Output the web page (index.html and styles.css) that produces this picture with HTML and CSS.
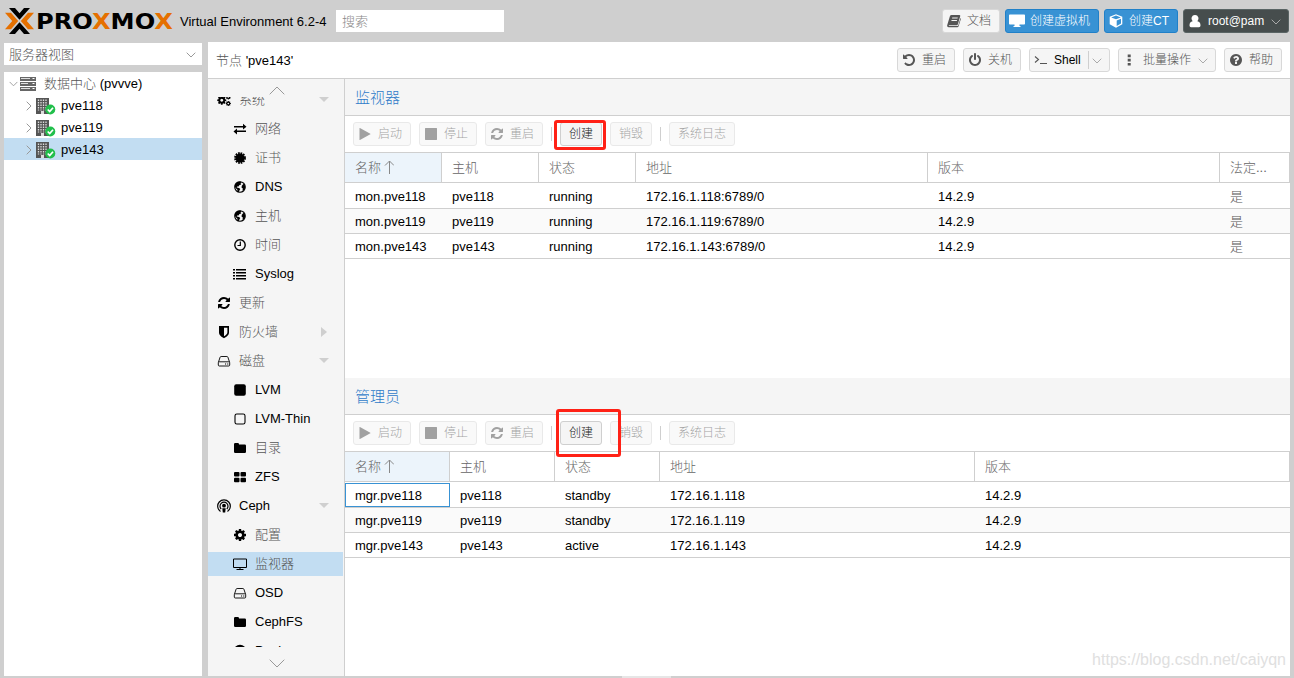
FILE: index.html
```html
<!DOCTYPE html>
<html lang="zh-CN">
  <head>
    <meta charset="UTF-8" />
    <meta name="viewport" content="width=device-width, initial-scale=1.0" />
    <title>pve143 - Proxmox Virtual Environment</title>
    <link rel="stylesheet" href="styles.css">
  </head>
  <body>
    <!-- icon sprite -->
    <svg class="sprite">
      <symbol id="play" viewBox="0 0 1792 1792"><path d="M1576 927l-1328 738q-23 13-39.5 3t-16.5-36v-1472q0-26 16.5-36t39.5 3l1328 738q23 13 23 31t-23 31z"/></symbol>
      <symbol id="stop" viewBox="0 0 1792 1792"><path d="M1664 192v1408q0 26-19 45t-45 19h-1408q-26 0-45-19t-19-45v-1408q0-26 19-45t45-19h1408q26 0 45 19t19 45z"/></symbol>
      <symbol id="refresh" viewBox="0 0 1792 1792"><path d="M1639 1056q0 5-1 7-64 268-268 434.5t-478 166.5q-146 0-282.5-55t-243.5-157l-129 129q-19 19-45 19t-45-19-19-45v-448q0-26 19-45t45-19h448q26 0 45 19t19 45-19 45l-137 137q71 66 161 102t187 36q134 0 250-65t186-179q11-17 53-117 8-23 30-23h192q13 0 22.5 9.5t9.5 22.5zm25-800v448q0 26-19 45t-45 19h-448q-26 0-45-19t-19-45 19-45l138-138q-148-137-349-137-134 0-250 65t-186 179q-11 17-53 117-8 23-30 23h-199q-13 0-22.5-9.5t-9.5-22.5v-7q65-268 270-434.5t480-166.5q146 0 284 55.5t245 156.5l130-129q19-19 45-19t45 19 19 45z"/></symbol>
      <symbol id="undo" viewBox="0 0 1792 1792"><path d="M1664 896q0 156-61 298t-164 245-245 164-298 61q-172 0-327-72.5t-264-204.5q-7-10-6.5-22.5t8.5-20.5l137-138q10-9 25-9 16 2 23 12 73 95 179 147t225 52q104 0 198.5-40.5t163.5-109.5 109.5-163.5 40.5-198.5-40.5-198.5-109.5-163.5-163.5-109.5-198.5-40.5q-98 0-188 35.5t-160 101.5l137 138q31 30 14 69-17 40-59 40h-448q-26 0-45-19t-19-45v-448q0-42 40-59 39-17 69 14l130 129q107-101 244.5-156.5t284.5-55.5q156 0 298 61t245 164 164 245 61 298z"/></symbol>
      <symbol id="power" viewBox="0 0 1792 1792"><path d="M1664 896q0 156-61 298t-164 245-245 164-298 61-298-61-245-164-164-245-61-298q0-182 80.5-343t226.5-270q43-32 95.5-25t83.5 50q32 42 24.5 94.5t-49.5 84.5q-98 74-151.5 181t-53.5 228q0 104 40.5 198.5t109.5 163.5 163.5 109.5 198.5 40.5 198.5-40.5 163.5-109.5 109.5-163.5 40.5-198.5q0-121-53.5-228t-151.5-181q-42-32-49.5-84.5t24.5-94.5q31-43 84-50t95 25q146 109 226.5 270t80.5 343zm-640-768v640q0 52-38 90t-90 38-90-38-38-90v-640q0-52 38-90t90-38 90 38 38 90z"/></symbol>
      <symbol id="question" viewBox="0 0 1792 1792"><path d="M1024 1376v-192q0-14-9-23t-23-9h-192q-14 0-23 9t-9 23v192q0 14 9 23t23 9h192q14 0 23-9t9-23zm256-672q0-88-55.5-163t-138.5-116-170-41q-243 0-371 213-15 24 8 42l132 100q7 6 19 6 16 0 25-12 53-68 86-92 34-24 86-24 48 0 85.5 26t37.5 59q0 38-20 61t-68 45q-63 28-115.5 86.5t-52.5 125.5v36q0 14 9 23t23 9h192q14 0 23-9t9-23q0-19 21.5-49.5t54.5-49.5q32-18 49-28.5t46-35 44.5-48 28-60.5 12.5-81zm384 192q0 209-103 385.5t-279.5 279.5-385.5 103-385.5-103-279.5-279.5-103-385.5 103-385.5 279.5-279.5 385.5-103 385.5 103 279.5 279.5 103 385.5z"/></symbol>
      <symbol id="cog" viewBox="0 0 1792 1792"><path d="M1152 896q0-106-75-181t-181-75-181 75-75 181 75 181 181 75 181-75 75-181zm512-109v222q0 12-8 23t-20 13l-185 28q-19 54-39 91 35 50 107 138 10 12 10 25t-9 23q-27 37-99 108t-94 71q-12 0-26-9l-138-108q-44 23-91 38-16 136-29 186-7 28-36 28h-222q-14 0-24.5-8.5t-11.5-21.5l-28-184q-49-16-90-37l-141 107q-10 9-25 9-14 0-25-11-126-114-165-168-7-10-7-23 0-12 8-23 15-21 51-66.5t54-70.5q-27-50-41-99l-183-27q-13-2-21-12.5t-8-23.5v-222q0-12 8-23t19-13l186-28q14-46 39-92-40-57-107-138-10-12-10-24 0-10 9-23 26-36 98.5-107.5t94.5-71.5q13 0 26 10l138 107q44-23 91-38 16-136 29-186 7-28 36-28h222q14 0 24.5 8.5t11.5 21.5l28 184q49 16 90 37l142-107q9-9 24-9 13 0 25 10 129 119 165 170 7 8 7 22 0 12-8 23-15 21-51 66.5t-54 70.5q26 50 41 98l183 28q13 2 21 12.5t8 23.5z"/></symbol>
      <symbol id="cogs" viewBox="0 0 14 14"><use href="#cog" x="-.5" y="2" width="10.5" height="10.5"/><use href="#cog" x="8.3" y="1" width="6" height="6"/><use href="#cog" x="8.3" y="7.5" width="6" height="6"/></symbol>
      <symbol id="exchange" viewBox="0 0 14 14"><path d="M1 4h9V1.8L13.5 4.8 10 7.6V5.5H1zM13 8.5H4V6.4L.5 9.6 4 12.4V10h9z"/></symbol>
      <symbol id="cert" viewBox="0 0 14 14"><circle cx="7" cy="7" r="4.6"/><circle cx="7" cy="7" r="5" fill="none" stroke="currentColor" stroke-width="1.8" stroke-dasharray="1.7 .92"/></symbol>
      <symbol id="globe" viewBox="0 0 14 14"><circle cx="7" cy="7" r="5.3" fill="none" stroke="currentColor" stroke-width="1.1"/><path d="M2 4.200L4.500 1.800 7.500 1.500 8.800 2.800 7.500 3.500 8.300 4.500 6.500 5 5.500 6.500 4 6.500 3.800 7.500 6 8 7.300 9 6.500 10.200 5.800 12.300 4.500 11.500 4.300 9.500 2.500 8 1.700 6zM10.500 3.800L12 5.500V8.500L10.500 10.800 9.500 10.500 9.800 8.500 8.500 7.500 8.800 5.800z"/></symbol>
      <symbol id="clock" viewBox="0 0 14 14"><path d="M7.300 3.500v4H4.500" fill="none" stroke="currentColor" stroke-width="1.200"/><circle cx="7" cy="7" r="5.200" fill="none" stroke="currentColor" stroke-width="1.400"/></symbol>
      <symbol id="list" viewBox="0 0 14 14"><path d="M0 2h2v1.600H0zM3 2h10v1.600H3zM0 5h2v1.600H0zM3 5h10v1.600H3zM0 8h2v1.600H0zM3 8h10v1.600H3zM0 11h2v1.500H0zM3 11h10v1.500H3z"/></symbol>
      <symbol id="shield" viewBox="0 0 14 14"><path fill-rule="evenodd" d="M2 1h10v6.500c0 3-3 4.700-5 5.700-2-1-5-2.700-5-5.700zM7 2.700v8.600c1.800-1 3.400-2.200 3.400-4V2.700z"/></symbol>
      <symbol id="hdd" viewBox="0 0 14 14"><path d="M2.200 7.800h9.600c.5 0 .9.400.9.900v2.400c0 .5-.4.900-.9.900H2.200c-.5 0-.9-.4-.9-.9V8.700c0-.5.4-.9.900-.9zM1.500 8l1.600-4.800q.3-.7 1-.7h5.800q.7 0 1 .7L12.500 8" fill="none" stroke="currentColor" stroke-width=".9"/><path d="M8 9.400h1.100v1.100H8zM10.200 9.400h1.100v1.100h-1.100z"/></symbol>
      <symbol id="square" viewBox="0 0 14 14"><rect x="1.200" y="1.300" width="11.600" height="11.400" rx="2"/></symbol>
      <symbol id="square-o" viewBox="0 0 14 14"><rect x="2" y="2" width="10" height="10" rx="1.800" fill="none" stroke="currentColor" stroke-width="1.100"/></symbol>
      <symbol id="folder" viewBox="0 0 14 14"><path d="M1 3.200Q1 2 2.200 2h2.600Q6 2 6 3.200v.3h5.800q1.200 0 1.200 1.200v6.100q0 1.200-1.200 1.200H2.200Q1 12 1 10.800z"/></symbol>
      <symbol id="grid" viewBox="0 0 14 14"><rect x="1" y="2" width="5.500" height="4.500" rx="1"/><rect x="7.500" y="2" width="5.500" height="4.500" rx="1"/><rect x="1" y="7.700" width="5.500" height="4.500" rx="1"/><rect x="7.500" y="7.700" width="5.500" height="4.500" rx="1"/></symbol>
      <symbol id="ceph" viewBox="0 0 14 14"><g fill="none" stroke="currentColor" stroke-width="1.200"><path d="M3.500 12.400A6.300 6.300 0 1 1 10.500 12.400M4.200 10A4 4 0 1 1 9.800 10"/></g><circle cx="7" cy="6.700" r="1.900"/><path d="M5.300 9.200h3.400L8.200 13.500H5.800z"/></symbol>
      <symbol id="screen" viewBox="0 0 16 14"><path d="M1.500 2h13v8.500h-13zM8 10.500v2M4.500 12.500h7" fill="none" stroke="currentColor" stroke-width="1"/></symbol>
      <symbol id="desktop" viewBox="0 0 16 14"><path d="M.8.500h14.400q.8 0 .8.800v8.400q0 .8-.8.800h-4.700v1.500h1V13h-7v-1h1v-1.500H.8q-.8 0-.8-.8V1.300Q0 .5.800.5z"/></symbol>
      <symbol id="cube" viewBox="0 0 14 14"><path fill-rule="evenodd" d="M7 .3l6.300 2.500v7.500L7 13.700.7 10.300V2.800zM7 1.500L2.200 3.400 7 5.200l4.800-1.800zM7.700 6.500v5.500l4.300-2.400V4.800z"/></symbol>
      <symbol id="book" viewBox="0 0 14 14"><path fill-rule="evenodd" d="M4.500 1h7.800q1.200 0 .9 1.200l-2.300 8q-.3 1.000-1.300 1.000H2.400q-.7 0-.7.700h8.600q.8 0 1-.7L13.500 4q.6.500.3 1.300l-2.200 7q-.3 1.000-1.300 1.000H2q-1.900 0-1.900-1.900L2.900 2.200Q3.300 1 4.500 1zM5.300 3.500l-.3 1h5.500l.3-1zM4.600 5.900l-.3 1h5.500l.3-1z"/></symbol>
      <symbol id="user" viewBox="0 0 14 14"><path d="M7 1a3.400 3.600 0 0 1 2.400 6.300c2 .2 3.100 1.700 3.100 4.300q0 1.600-1.500 1.600H3q-1.500 0-1.500-1.600c0-2.600 1.100-4.100 3.100-4.300A3.400 3.600 0 0 1 7 1z"/></symbol>
      <symbol id="prompt" viewBox="0 0 14 14"><path d="M1 3.500l3.500 3L1 9.500M6 10.500h7" fill="none" stroke="currentColor" stroke-width="1.100"/></symbol>
      <symbol id="dots" viewBox="0 0 14 14"><path d="M4.700 1.500h3v2.700h-3zM4.700 5.700h3v2.700h-3zM4.700 9.900h3v2.700h-3z"/></symbol>
      <symbol id="support" viewBox="0 0 14 14"><circle cx="7" cy="7" r="5" fill="none" stroke="currentColor" stroke-width="2.500"/></symbol>
      <symbol id="servers" viewBox="0 0 16 14"><path d="M0 0h16v4H0zM0 5h16v4H0zM0 10h16v4H0z" fill="#666"/><path d="M1 1.500h9M1 6.500h7M1 11.500h9" stroke="#ddd"/><path d="M12.500 1.500h2M12.500 6.500h2M12.500 11.500h2" stroke="#fff"/></symbol>
      <symbol id="node" viewBox="0 0 20 17"><path d="M0 0h13v16H0z" fill="#555"/><path d="M2.500 1.500v11M5 1.500v11M7.500 1.500v11M10 1.500v11" stroke="#ddd" stroke-width="1.300" stroke-dasharray="1.500 1"/><path d="M5 13h3v3H5z" fill="#ddd"/><circle cx="14.300" cy="11.500" r="5" fill="#21bf4b"/><path d="M11.700 11.500l2 2 3.300-3.700" fill="none" stroke="#fff" stroke-width="1.700"/></symbol>
      <symbol id="down" viewBox="0 0 10 6"><path d="M.7.700L5 5 9.300.7" fill="none" stroke="currentColor"/></symbol>
      <symbol id="scroll" viewBox="0 0 16 9"><path d="M.7.700L8 8 15.300.7" fill="none" stroke="currentColor"/></symbol>
      <symbol id="right" viewBox="0 0 6 10"><path d="M.7.700L5 5 .7 9.300" fill="none" stroke="currentColor"/></symbol>
      <symbol id="up-arrow" viewBox="0 0 10 14"><path d="M5.500 14V1M1 5.500L5.500 1 10 5.500" fill="none" stroke="currentColor"/></symbol>
    </svg>

    <header class="topbar">
      <svg class="logo" width="170" height="28" viewBox="0 0 170 28">
        <path class="orange" d="M0 5.700h6L13.200 14 6 22.300H0L7.200 14zM29 5.700h-6L15.800 14l7.200 8.300h6L21.800 14z"/>
        <path d="M4 1h6l4.500 5.200L19 1h6L14.500 12.700zM4 27h6l4.500-5.200L19 27h6L14.500 15.300z"/>
        <text x="31" y="21.500" textLength="137" lengthAdjust="spacingAndGlyphs">PRO<tspan class="orange">X</tspan>MO<tspan class="orange">X</tspan></text>
      </svg>
      <span class="version">Virtual Environment 6.2-4</span>
      <input class="search" type="text" placeholder="搜索" />
      <div class="top-actions">
        <button class="btn docs"><svg><use href="#book"/></svg>文档</button>
        <button class="btn blue vm"><svg><use href="#desktop"/></svg>创建虚拟机</button>
        <button class="btn blue ct"><svg><use href="#cube"/></svg>创建CT</button>
        <button class="btn dark"><svg><use href="#user"/></svg>root@pam<svg class="caret"><use href="#down"/></svg></button>
      </div>
    </header>

    <div class="workspace">
      <aside class="resources">
        <div class="view-select">服务器视图<svg class="caret"><use href="#down"/></svg></div>
        <div class="tree">
          <div class="tree-row root"><svg class="caret"><use href="#down"/></svg><svg class="dc"><use href="#servers"/></svg><span><span class="cn">数据中心</span> (pvvve)</span></div>
          <div class="tree-row"><svg class="expand"><use href="#right"/></svg><svg class="node"><use href="#node"/></svg>pve118</div>
          <div class="tree-row"><svg class="expand"><use href="#right"/></svg><svg class="node"><use href="#node"/></svg>pve119</div>
          <div class="tree-row selected"><svg class="expand"><use href="#right"/></svg><svg class="node"><use href="#node"/></svg>pve143</div>
        </div>
      </aside>

      <main class="main">
        <div class="main-head">
          <span class="main-title"><span class="cn">节点</span> 'pve143'</span>
          <button class="btn w58"><svg><use href="#undo"/></svg>重启</button>
          <button class="btn w58"><svg><use href="#power"/></svg>关机</button>
          <button class="btn shell"><svg><use href="#prompt"/></svg><span>Shell</span><svg class="caret"><use href="#down"/></svg></button>
          <button class="btn bulk"><svg><use href="#dots"/></svg>批量操作<svg class="caret"><use href="#down"/></svg></button>
          <button class="btn w58"><svg><use href="#question"/></svg>帮助</button>
        </div>

        <div class="main-body">
          <nav class="nav">
            <div class="scroller"><svg class="flip"><use href="#scroll"/></svg></div>
            <div class="nav-clip">
              <ul>
                <li class="cn open"><svg><use href="#cogs"/></svg>系统</li>
                <li class="cn sub"><svg><use href="#exchange"/></svg>网络</li>
                <li class="cn sub"><svg><use href="#cert"/></svg>证书</li>
                <li class="sub"><svg><use href="#globe"/></svg>DNS</li>
                <li class="cn sub"><svg><use href="#globe"/></svg>主机</li>
                <li class="cn sub"><svg><use href="#clock"/></svg>时间</li>
                <li class="sub"><svg><use href="#list"/></svg>Syslog</li>
                <li class="cn"><svg><use href="#refresh"/></svg>更新</li>
                <li class="cn closed"><svg><use href="#shield"/></svg>防火墙</li>
                <li class="cn open"><svg><use href="#hdd"/></svg>磁盘</li>
                <li class="sub"><svg><use href="#square"/></svg>LVM</li>
                <li class="sub"><svg><use href="#square-o"/></svg>LVM-Thin</li>
                <li class="cn sub"><svg><use href="#folder"/></svg>目录</li>
                <li class="sub"><svg><use href="#grid"/></svg>ZFS</li>
                <li class="open"><svg class="big"><use href="#ceph"/></svg>Ceph</li>
                <li class="cn sub"><svg><use href="#cog"/></svg>配置</li>
                <li class="cn sub selected"><svg class="big"><use href="#screen"/></svg>监视器</li>
                <li class="sub"><svg><use href="#hdd"/></svg>OSD</li>
                <li class="sub"><svg><use href="#folder"/></svg>CephFS</li>
                <li class="sub"><svg><use href="#support"/></svg>Pools</li>
              </ul>
            </div>
            <div class="scroller bottom"><svg><use href="#scroll"/></svg></div>
          </nav>

          <div class="content">
            <section class="panel">
              <h2>监视器</h2>
              <div class="toolbar">
                <button class="btn w58" disabled><svg><use href="#play"/></svg>启动</button>
                <button class="btn w58" disabled><svg><use href="#stop"/></svg>停止</button>
                <button class="btn w58" disabled><svg><use href="#refresh"/></svg>重启</button>
                <i class="sep"></i>
                <button class="btn w42 create">创建<span class="mark mark-mon"></span></button>
                <button class="btn w42" disabled>销毁</button>
                <i class="sep"></i>
                <button class="btn w66" disabled>系统日志</button>
              </div>
              <div class="grid mon">
                <div class="row head"><div class="sorted">名称<svg><use href="#up-arrow"/></svg></div><div>主机</div><div>状态</div><div>地址</div><div>版本</div><div>法定...</div></div>
                <div class="row"><div>mon.pve118</div><div>pve118</div><div>running</div><div>172.16.1.118:6789/0</div><div>14.2.9</div><div class="cn">是</div></div>
                <div class="row"><div>mon.pve119</div><div>pve119</div><div>running</div><div>172.16.1.119:6789/0</div><div>14.2.9</div><div class="cn">是</div></div>
                <div class="row"><div>mon.pve143</div><div>pve143</div><div>running</div><div>172.16.1.143:6789/0</div><div>14.2.9</div><div class="cn">是</div></div>
              </div>
            </section>

            <section class="panel">
              <h2>管理员</h2>
              <div class="toolbar">
                <button class="btn w58" disabled><svg><use href="#play"/></svg>启动</button>
                <button class="btn w58" disabled><svg><use href="#stop"/></svg>停止</button>
                <button class="btn w58" disabled><svg><use href="#refresh"/></svg>重启</button>
                <i class="sep"></i>
                <button class="btn w42 create">创建<span class="mark mark-mgr"></span></button>
                <button class="btn w42" disabled>销毁</button>
                <i class="sep"></i>
                <button class="btn w66" disabled>系统日志</button>
              </div>
              <div class="grid mgr">
                <div class="row head"><div class="sorted">名称<svg><use href="#up-arrow"/></svg></div><div>主机</div><div>状态</div><div>地址</div><div>版本</div></div>
                <div class="row"><div class="focused">mgr.pve118</div><div>pve118</div><div>standby</div><div>172.16.1.118</div><div>14.2.9</div></div>
                <div class="row"><div>mgr.pve119</div><div>pve119</div><div>standby</div><div>172.16.1.119</div><div>14.2.9</div></div>
                <div class="row"><div>mgr.pve143</div><div>pve143</div><div>active</div><div>172.16.1.143</div><div>14.2.9</div></div>
              </div>
            </section>
          </div>
        </div>
      </main>
    </div>
    <div class="splitter"></div>
    <div class="watermark">https://blog.csdn.net/caiyqn</div>
  </body>
</html>
```
FILE: styles.css
```css
* {
  margin: 0;
  padding: 0;
  box-sizing: border-box;
}

body {
  width: 1294px;
  height: 678px;
  overflow: hidden;
  background-color: #cfcfcf;
  color: #000;
  font: 300 13px/20px "Liberation Sans", "Noto Sans CJK SC", sans-serif;
  display: flex;
  flex-direction: column;
}

svg {
  display: block;
  flex: none;
  width: 14px;
  height: 14px;
  fill: currentColor;
}

.sprite {
  position: absolute;
  width: 0;
  height: 0;
}

.cn {
  color: #555;
}

/* top bar */
.topbar {
  height: 42px;
  flex: none;
  display: flex;
  align-items: center;
  padding: 0 5px;
}

.logo {
  width: 170px;
  height: 28px;
}

.logo text {
  font: bold 21px "DejaVu Sans", sans-serif;
}

.logo .orange {
  fill: #e57000;
}

.version {
  width: 156px;
  margin-left: 5px;
  padding-top: 1px;
  white-space: nowrap;
}

.search {
  width: 168px;
  height: 22px;
  border: none;
  padding: 0 6px;
  font: inherit;
  background-color: #fff;
}

.search::placeholder {
  color: #888;
}

.top-actions {
  margin-left: auto;
  display: flex;
  gap: 5px;
}

/* buttons */
.btn {
  height: 24px;
  flex: none;
  display: flex;
  align-items: center;
  padding: 0 5px 0 4px;
  border: 1px solid #d8d8d8;
  border-radius: 3px;
  background-color: #f5f5f5;
  color: #555;
  font: 300 12px/18px "Liberation Sans", "Noto Sans CJK SC", sans-serif;
  white-space: nowrap;
}

.btn svg {
  margin-right: 6px;
}

.btn .caret {
  width: 10px;
  height: 6px;
  margin: 2px 0 0 auto;
  color: #aaa;
}

.btn:disabled {
  opacity: 0.55;
}

.docs {
  width: 58px;
}

.btn.blue {
  background-color: #3892d4;
  border-color: #2080c8;
  color: #fff;
}

.vm {
  width: 94px;
  padding: 0 3px;
}

.btn.vm svg {
  width: 16px;
  margin-right: 5px;
}

.ct {
  width: 74px;
  padding: 0 4px;
}

.btn.dark {
  width: 106px;
  background-color: #464d4d;
  border-color: #596464;
  color: #fff;
  padding: 0 7px 0 4px;
}

.w58 {
  width: 58px;
}

.w42,
.w66 {
  width: 42px;
  padding: 0;
  justify-content: center;
}

.w66 {
  width: 66px;
}

.shell {
  width: 81px;
  color: #000;
}

.shell svg:first-child {
  color: #555;
}

.shell span {
  padding-right: 7px;
  border-right: 1px solid #cfcfcf;
}

.shell .caret {
  margin-right: 2px;
}

.bulk {
  width: 98px;
  padding-right: 7px;
}

/* layout */
.workspace {
  height: 634px;
  flex: none;
  display: flex;
  gap: 6px;
  padding: 0 4px;
}

.resources {
  width: 198px;
  display: flex;
  flex-direction: column;
  gap: 7px;
  padding-top: 1px;
}

.view-select {
  height: 22px;
  display: flex;
  align-items: center;
  justify-content: space-between;
  padding: 1px 6px 0 5px;
  background-color: #fff;
  color: #555;
}

.view-select .caret {
  width: 10px;
  height: 6px;
  color: #999;
}

.tree {
  flex: 1;
  background-color: #fff;
}

.tree-row {
  height: 22px;
  display: flex;
  align-items: center;
  padding: 2px 0 0 22px;
}

.tree-row.root {
  padding-left: 5px;
}

.tree-row.root .caret {
  width: 9px;
  height: 6px;
  margin-right: 2px;
  color: #999;
}

.tree-row .dc {
  width: 16px;
  height: 14px;
  margin-right: 8px;
}

.tree-row .expand {
  width: 6px;
  height: 10px;
  margin-right: 4px;
  color: #999;
}

.tree-row .node {
  width: 20px;
  height: 17px;
  margin-right: 5px;
}

.tree-row.selected {
  background-color: #c2ddf2;
}

.main {
  width: 1082px;
  background-color: #fff;
}

.main-head {
  height: 37px;
  display: flex;
  align-items: center;
  gap: 8px;
  padding: 0 8px;
  border-bottom: 1px solid #cfcfcf;
}

.main-title {
  margin-right: auto;
  padding-top: 1px;
}

.main-body {
  height: 597px;
  display: flex;
}

/* side navigation */
.nav {
  width: 137px;
  border-right: 1px solid #cfcfcf;
  background-color: #f5f5f5;
}

.scroller {
  height: 18px;
  display: flex;
  justify-content: center;
  align-items: flex-end;
  padding: 0 0 2px 1px;
}

.scroller svg {
  width: 16px;
  height: 9px;
  color: #999;
}

.scroller .flip {
  transform: scaleY(-1);
}

.scroller.bottom {
  height: 29px;
  padding-bottom: 8px;
}

.nav-clip {
  height: 550px;
  overflow: hidden;
}

.nav ul {
  list-style: none;
  display: flex;
  flex-direction: column;
  gap: 5px;
  margin-top: -9px;
}

.nav li {
  height: 24px;
  flex: none;
  display: flex;
  align-items: center;
  width: 135px;
  padding: 0 0 1px 9px;
}

.nav li svg {
  width: 14px;
  height: 14px;
  margin-right: 8px;
  color: #000;
}

.nav li.sub {
  padding-left: 25px;
}

.nav li svg.big {
  width: 16px;
  margin: 0 7px 0 -1px;
}

.nav li.selected {
  background-color: #c2ddf2;
}

.nav li.open::after,
.nav li.closed::after {
  content: "";
  margin: 0 14px 0 auto;
  border: 5px solid transparent;
  border-top-color: #cfcfcf;
  border-bottom-width: 0;
}

.nav li.closed::after {
  margin-right: 16px;
  border: 5px solid transparent;
  border-left: 6px solid #cfcfcf;
  border-right-width: 0;
}

/* panels */
.content {
  width: 945px;
}

.panel {
  height: 299px;
}

.panel h2 {
  height: 37px;
  padding-left: 10px;
  background-color: #f5f5f5;
  border-bottom: 1px solid #cfcfcf;
  color: #2f7bc9;
  font-size: 15px;
  font-weight: 300;
  line-height: 37px;
}

.toolbar {
  height: 37px;
  display: flex;
  align-items: center;
  gap: 8px;
  padding-left: 8px;
  border-bottom: 1px solid #cfcfcf;
}

.sep {
  width: 1px;
  height: 14px;
  background-color: #cfcfcf;
}

.create {
  position: relative;
  border-color: #cfcfcf;
  color: #222;
}

/* red highlights around the create buttons */
.mark {
  position: absolute;
  z-index: 1;
  border: 3px solid #ff2116;
  border-radius: 3px;
}

.mark-mon {
  left: -7px;
  top: -3px;
  width: 52px;
  height: 30px;
}

.mark-mgr {
  left: -5px;
  top: -13px;
  width: 65px;
  height: 48px;
}

.row {
  height: 25px;
  display: grid;
  border-bottom: 1px solid #cfcfcf;
  line-height: 26px;
}

.mon .row {
  grid-template-columns: 97px 97px 97px 292px 292px 70px;
}

.mgr .row {
  grid-template-columns: 105px 105px 105px 315px 315px;
}

.row > div {
  height: 24px;
  padding-left: 10px;
  white-space: nowrap;
}

.row:nth-child(odd) {
  background-color: #fafafa;
}

.row:nth-child(2) {
  height: 26px;
  padding-top: 1px;
}

.row:nth-child(4),
.row.head {
  background-color: #fff;
}

.row.head {
  height: 30px;
  color: #666;
  line-height: 29px;
}

.row.head > div {
  height: 29px;
  display: flex;
  align-items: center;
  border-right: 1px solid #cfcfcf;
}

.row.head .sorted {
  background-color: #ecf4fb;
}

.row.head svg {
  width: 10px;
  height: 14px;
  margin: 0 0 2px 3px;
  color: #888;
}

.row .focused {
  padding-left: 9px;
  border: 1px solid #3892d4;
  line-height: 24px;
}

.splitter {
  width: 49px;
  height: 2px;
  margin-left: 622px;
  background-color: #e6e6e6;
}

.watermark {
  position: absolute;
  right: 8px;
  bottom: 8px;
  color: #e0e0e0;
  font-size: 16px;
}
```
